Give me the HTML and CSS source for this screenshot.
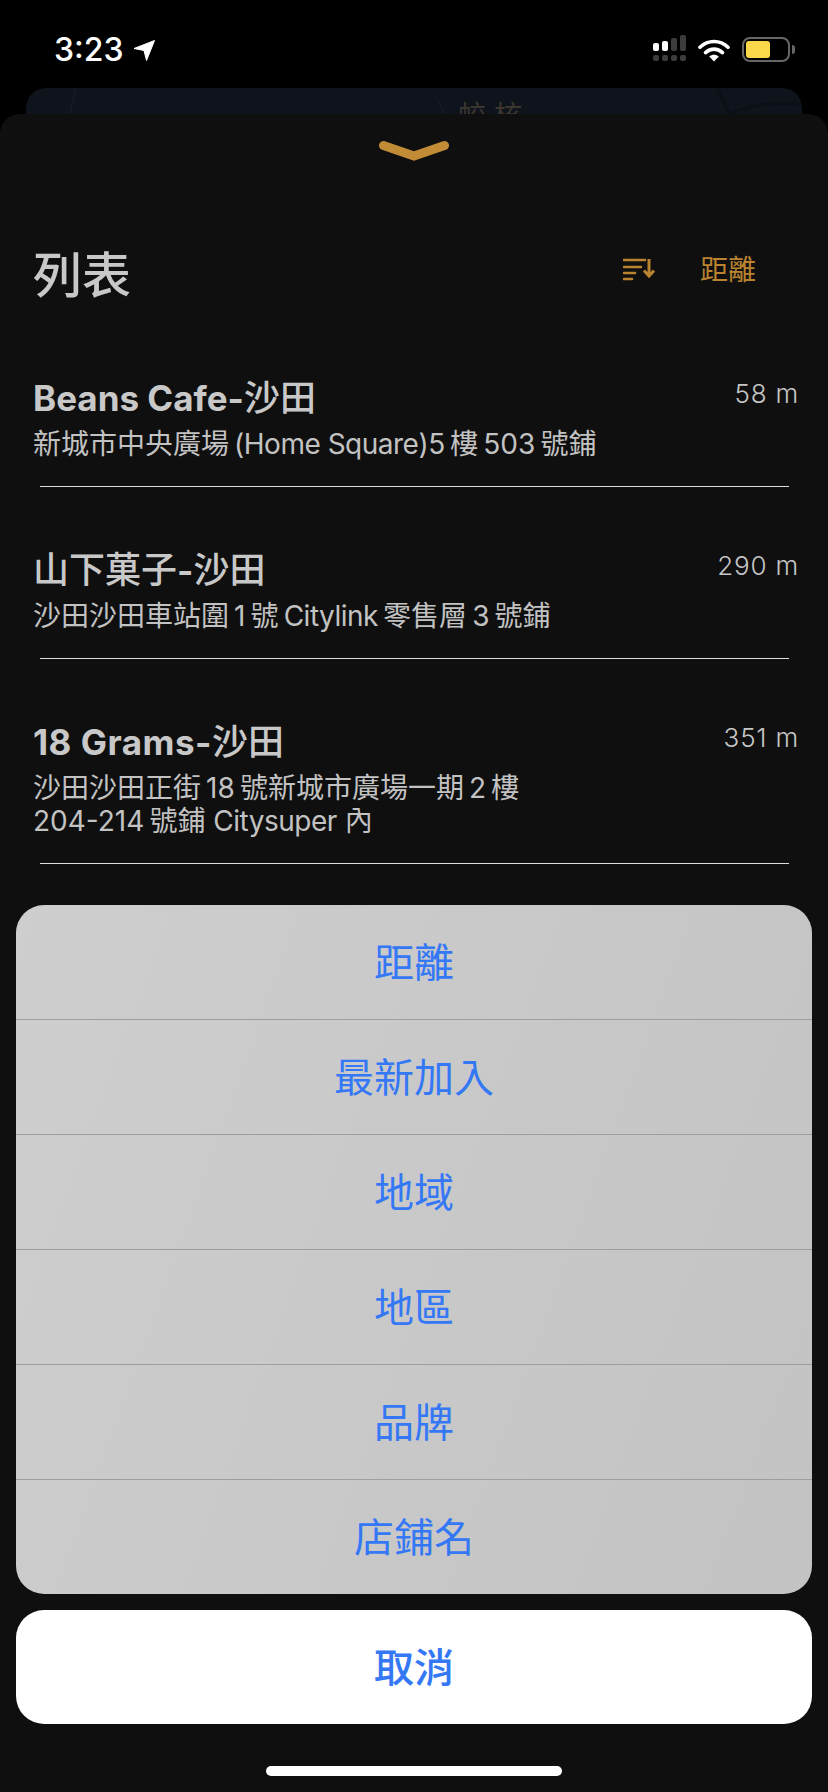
FILE: index.html
```html
<!DOCTYPE html>
<html lang="zh-Hant">
<head>
    <meta charset="UTF-8">
    <meta name="viewport" content="width=device-width, initial-scale=1.0">
    <title>列表</title>
    <link rel="stylesheet" href="styles.css">
</head>
<body>
    <div id="screen">
        <!-- Status bar -->
        <div class="status">
            <div class="status-left">
                <span class="time">3:23</span>
                <svg class="arrow" width="22" height="21" viewBox="0 0 22 21"><path d="M1 8.5 21.5 0.5 13.5 20.5 11 10.5z" fill="#fff" stroke="#fff" stroke-width="1" stroke-linejoin="round"/></svg>
            </div>
            <div class="status-right">
                <svg width="34" height="27" viewBox="0 0 34 27">
                    <rect x="0" y="8" width="6" height="8" rx="2" fill="#fff"/>
                    <rect x="9" y="6" width="6" height="10" rx="2" fill="#fff"/>
                    <rect x="18" y="3" width="6" height="13" rx="2" fill="#3c3c3c"/>
                    <rect x="27" y="0" width="6" height="16" rx="2" fill="#3c3c3c"/>
                    <rect x="0" y="20" width="6" height="6" rx="2" fill="#3c3c3c"/>
                    <rect x="9" y="20" width="6" height="6" rx="2" fill="#3c3c3c"/>
                    <rect x="18" y="20" width="6" height="6" rx="2" fill="#3c3c3c"/>
                    <rect x="27" y="20" width="6" height="6" rx="2" fill="#3c3c3c"/>
                </svg>
                <svg class="wifi" width="32" height="24" viewBox="0 0 32 24">
                    <path d="M2 9.2C10 1.6 22 1.6 30 9.2" fill="none" stroke="#fff" stroke-width="3.6" stroke-linecap="round"/>
                    <path d="M7.5 14.6C12.6 10 19.4 10 24.5 14.6" fill="none" stroke="#fff" stroke-width="3.6" stroke-linecap="round"/>
                    <path d="M11.2 18.6C14 16.2 18 16.2 20.8 18.6L16 23.6z" fill="#fff"/>
                </svg>
                <div class="battery"><div class="battery-level"></div></div>
                <div class="battery-nub"></div>
            </div>
        </div>

        <!-- Map peeking out behind the sheet -->
        <div class="map-peek">
            <svg class="map-lines" width="776" height="26" viewBox="0 0 776 26">
                <path d="M50 0 44 26" fill="none" stroke="#1a1e25" stroke-width="1"/>
                <path d="M404 4C412 10 416 18 418 26" fill="none" stroke="#1a1e25" stroke-width="1"/>
                <path d="M691 0C696 10 700 20 704 26" fill="none" stroke="#0b0f16" stroke-width="3"/>
                <path d="M704 26C725 16 750 14 776 16" fill="none" stroke="#0b0f16" stroke-width="3"/>
            </svg>
            <span class="map-label">蛟 核</span>
        </div>

        <div class="sheet">
            <svg class="chevron" width="70" height="22" viewBox="0 0 70 22"><path d="M4.500 5.500 35 16 65.500 5.500" fill="none" stroke="#c18c35" stroke-width="9" stroke-linecap="round"/></svg>

            <div class="sheet-head">
                <h1>列表</h1>
                <div class="sort">
                    <svg width="32" height="24" viewBox="0 0 32 24">
                        <path d="M1 2H22M1 9H18M1 15H12M1 21H9" stroke="#b9832f" stroke-width="2.600" stroke-linecap="round"/>
                        <path d="M26 1V17M21 12.500 26 18 31 12.500" fill="none" stroke="#b9832f" stroke-width="3"/>
                    </svg>
                    <span>距離</span>
                </div>
            </div>

            <div class="shop">
                <div class="shop-info">
                    <div class="shop-name"><b>Beans Cafe-</b>沙田</div>
                    <div class="shop-addr">新城市中央廣場&#8201;<span class="en">(Home Square)</span>5&#8201;樓&#8201;503&#8201;號鋪</div>
                </div>
                <div class="shop-dist">58 m</div>
            </div>
            <div class="shop">
                <div class="shop-info">
                    <div class="shop-name">山下菓子<b>-</b>沙田</div>
                    <div class="shop-addr">沙田沙田車站圍&#8201;1&#8201;號&#8201;<span class="en">Citylink</span>&#8201;零售層&#8201;3&#8201;號鋪</div>
                </div>
                <div class="shop-dist">290 m</div>
            </div>
            <div class="shop">
                <div class="shop-info">
                    <div class="shop-name"><b class="wide">18 Grams-</b>沙田</div>
                    <div class="shop-addr">沙田沙田正街&#8201;18&#8201;號新城市廣場一期&#8201;2&#8201;樓<br>204-214&#8201;號鋪 <span class="en">Citysuper</span> 內</div>
                </div>
                <div class="shop-dist">351 m</div>
            </div>
        </div>

        <!-- Sort options -->
        <div class="actions">
            <div class="action-group">
                <div class="action">距離</div>
                <div class="action">最新加入</div>
                <div class="action">地域</div>
                <div class="action">地區</div>
                <div class="action">品牌</div>
                <div class="action">店鋪名</div>
            </div>
            <div class="cancel">取消</div>
            <div class="home-bar"></div>
        </div>
    </div>
</body>
</html>
```

FILE: styles.css
```css
* {
    box-sizing: border-box;
}
body {
    margin: 0;
    background: #000;
    font-family: Inter, "Noto Sans CJK TC", sans-serif;
}
#screen {
    position: relative;
    width: 828px;
    height: 1792px;
    display: flex;
    flex-direction: column;
    overflow: hidden;
    background: #000;
}

/* Status bar */
.status {
    height: 88px;
    display: flex;
    justify-content: space-between;
    padding: 35px 33px 0 54px;
}
.status-left {
    display: flex;
    align-items: flex-start;
    gap: 9px;
}
.time {
    color: #fff;
    font-size: 32px;
    line-height: 30px;
    font-weight: 500;
}
.arrow {
    margin-top: 5px;
}
.status-right {
    display: flex;
    align-items: flex-start;
}
.wifi {
    margin: 3px 0 0 11px;
}
.battery {
    width: 48px;
    height: 25px;
    margin: 2px 0 0 12px;
    padding: 2px;
    border: 2px solid #666;
    border-radius: 8px;
}
.battery-level {
    width: 24px;
    height: 17px;
    background: #f9d849;
    border-radius: 3px;
}
.battery-nub {
    width: 3px;
    height: 9px;
    margin: 10px 0 0 2px;
    background: #666;
    border-radius: 0 3px 3px 0;
}

/* Map behind */
.map-peek {
    position: relative;
    height: 26px;
    margin: 0 26px;
    background: #0f131b;
    border-radius: 20px 20px 0 0;
    overflow: hidden;
}
.map-lines {
    position: absolute;
    left: 0;
    top: 0;
}
.map-label {
    position: absolute;
    left: 432px;
    top: 12px;
    color: #3b3730;
    font-size: 28px;
    line-height: 32px;
    white-space: nowrap;
}

/* Sheet with the list */
.sheet {
    flex: 1;
    padding: 0 29px 0 33px;
    background: #0f0f0f;
    border-radius: 20px 20px 0 0;
}
.chevron {
    display: block;
    margin: 26px 0 0 346px;
}
.sheet-head {
    display: flex;
    justify-content: space-between;
    align-items: center;
    height: 64px;
    margin-top: 82px;
    margin-bottom: 7px;
}
.sheet-head h1 {
    margin: 0;
    color: #c8c8c8;
    font-size: 49px;
    line-height: 64px;
    font-weight: 500;
}
.sort {
    display: flex;
    align-items: center;
    gap: 45px;
    margin-bottom: 12px;
    padding-right: 43px;
    color: #b9832f;
    font-size: 28px;
}
.sort span {
    line-height: 36px;
}

.shop {
    position: relative;
    display: flex;
    justify-content: space-between;
    align-items: flex-start;
    padding: 63px 0 26px;
}
.shop:first-of-type {
    padding-top: 0;
}
/* the rule starts a little inside the text column */
.shop::after {
    content: "";
    position: absolute;
    left: 7px;
    right: 10px;
    bottom: 0;
    height: 1px;
    background: #dcdcdc;
}
.shop-name {
    color: #c8c8c8;
    font-size: 36px;
    line-height: 40px;
    font-weight: 500;
}
.shop-name b {
    font-size: 35px;
    font-weight: 700;
}
.shop-name .wide {
    letter-spacing: 0.500px;
}
.shop-addr {
    margin-top: 10px;
    color: #c2c2c2;
    font-size: 28px;
    line-height: 33px;
    font-weight: 400;
}
.shop-addr .en {
    letter-spacing: -0.500px;
}
.shop-dist {
    margin-top: -4px;
    color: #c6c6c6;
    font-size: 26px;
    line-height: 40px;
    font-weight: 300;
    letter-spacing: 0.800px;
    white-space: nowrap;
}

/* Action sheet over the list */
.actions {
    position: absolute;
    left: 16px;
    right: 16px;
    bottom: 16px;
    display: flex;
    flex-direction: column;
}
.action-group {
    border-radius: 28px;
    overflow: hidden;
    background: linear-gradient(110deg, #cecece, #c3c3c3);
}
.action {
    height: 115px;
    padding-bottom: 4px;
    display: flex;
    align-items: center;
    justify-content: center;
    color: #3478f6;
    font-size: 40px;
    border-top: 1px solid #9e9e9e;
}
.action:first-child {
    height: 114px;
    border-top: 0;
}
.cancel {
    height: 114px;
    margin-top: 16px;
    padding-bottom: 4px;
    display: flex;
    align-items: center;
    justify-content: center;
    background: #fff;
    border-radius: 28px;
    color: #3478f6;
    font-size: 40px;
    font-weight: 500;
}
.home-bar {
    width: 296px;
    height: 10px;
    margin: 42px auto 0;
    background: #fff;
    border-radius: 5px;
}
```
